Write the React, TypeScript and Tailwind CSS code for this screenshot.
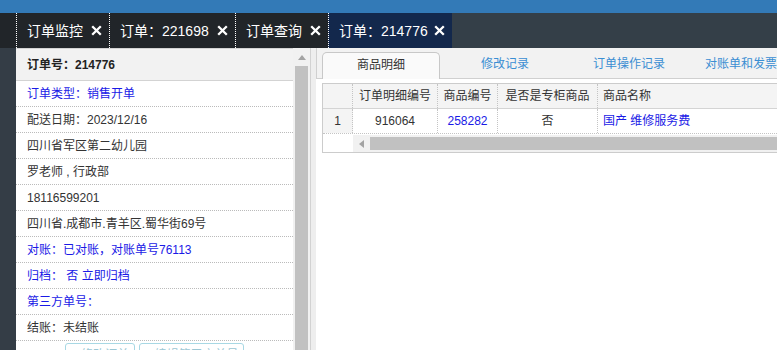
import React from "react";

function CloseX() {
  return (
    <svg width="11" height="11" viewBox="0 0 11 11" className="shrink-0">
      <path d="M1.2 1.2L9.8 9.8M9.8 1.2L1.2 9.8" stroke="white" strokeWidth="2.3" strokeLinecap="butt" />
    </svg>
  );
}

const topTabs = [
  { label: "订单监控", w: "w-[93px]", active: false },
  { label: "订单：221698", w: "w-[126px]", active: false },
  { label: "订单查询", w: "w-[93px]", active: false },
  { label: "订单：214776", w: "w-[124px]", active: true },
];

const rows = [
  { t: "订单类型：销售开单", blue: true },
  { t: "配送日期：2023/12/16", blue: false },
  { t: "四川省军区第二幼儿园", blue: false },
  { t: "罗老师 , 行政部", blue: false },
  { t: "18116599201", blue: false },
  { t: "四川省.成都市.青羊区.蜀华街69号", blue: false },
  { t: "对账：已对账，对账单号76113", blue: true },
  { t: "归档： 否 立即归档", blue: true },
  { t: "第三方单号：", blue: true },
  { t: "结账：未结账", blue: false },
];

const subTabs = [
  { label: "商品明细", w: "w-[118px]", active: true },
  { label: "修改记录", w: "w-[118px]", active: false },
  { label: "订单操作记录", w: "w-[118px]", active: false },
  { label: "对账单和发票", w: "w-[94px]", active: false },
];

export default function App() {
  return (
    <div className="w-[777px] h-[350px] overflow-hidden bg-[#343d46] flex flex-col font-['Liberation_Sans','Noto_Sans_CJK_SC',sans-serif]">
      <div className="h-[13px] bg-[#337ab7] shrink-0" />
      <div className="h-[35px] shrink-0 flex bg-[#343f48]">
        <div className="w-[16px] bg-[#212529]" />
        {topTabs.map((t) => (
          <div
            key={t.label}
            className={`${t.w} h-full flex items-center justify-between pl-[10px] pr-[7px] border-l border-dotted border-white text-white text-[14px] leading-none ${
              t.active ? "bg-[#13284c]" : "bg-[#212529]"
            }`}
          >
            <span>{t.label}</span>
            <CloseX />
          </div>
        ))}
      </div>
      <div className="flex-1 flex min-h-0">
        <div className="w-[16px] shrink-0" />
        {/* left panel */}
        <div className="w-[277px] shrink-0 bg-white flex flex-col text-[12px] leading-none">
          <div className="h-[33px] shrink-0 bg-[#f2f2f2] border-t border-b border-[#d3d3d3] flex items-center pl-[11px] font-bold text-[#222]">
            订单号：214776
          </div>
          {rows.map((r) => (
            <div
              key={r.t}
              className={`h-[26px] shrink-0 border-b border-dotted border-[#bbbbbb] flex items-center pl-[11px] whitespace-pre ${
                r.blue ? "text-[#1a1ae6]" : "text-[#333]"
              }`}
            >
              {r.t}
            </div>
          ))}
          <div className="flex justify-center gap-[4px] pt-[2px]">
            <div className="w-[70px] h-[24px] border border-[#a8d8e4] rounded-[3px] flex items-center justify-center text-[#9cc7d4]">
              ✎修改订单
            </div>
            <div className="w-[105px] h-[24px] border border-[#a8d8e4] rounded-[3px] flex items-center justify-center text-[#9cc7d4]">
              ✎编辑第三方单号
            </div>
          </div>
        </div>
        {/* left scrollbar */}
        <div className="w-[17px] shrink-0 bg-[#f1f1f1] flex flex-col pt-[1px]">
          <div className="h-[17px] flex items-center justify-center">
            <svg width="8" height="5" viewBox="0 0 8 5">
              <path d="M0 5L4 0L8 5Z" fill="#a3a3a3" />
            </svg>
          </div>
          <div className="flex-1 mx-[2px] bg-[#c1c1c1]" />
        </div>
        {/* splitter */}
        <div className="w-[6px] shrink-0 bg-[#eeeeee] border-l border-[#d2d2d2]" />
        {/* right panel */}
        <div className="flex-1 min-w-0 bg-white overflow-hidden text-[12px] leading-none">
          <div className="h-[31px] bg-[#f2f2f2] border-b border-l border-[#d0d0d0] flex items-end pl-[5px]">
            {subTabs.map((t) =>
              t.active ? (
                <div
                  key={t.label}
                  className={`${t.w} h-[27px] -mb-px shrink-0 bg-[#fafafa] border border-b-0 border-[#c8c8c8] rounded-t-[5px] flex items-center justify-center pb-[2px] text-[#333]`}
                >
                  {t.label}
                </div>
              ) : (
                <div
                  key={t.label}
                  className={`${t.w} ml-[6px] h-[27px] shrink-0 flex items-center justify-center pb-[2px] text-[#3a8ed3]`}
                >
                  {t.label}
                </div>
              )
            )}
          </div>
          <div className="mt-[4px] ml-[6px] w-[560px] border border-[#cccccc]">
            <div className="h-[25px] flex bg-[#f4f4f4] border-b border-[#d4d4d4] text-[#333]">
              <div className="w-[30px] shrink-0 border-r border-dotted border-[#c4c4c4]" />
              <div className="w-[85px] shrink-0 border-r border-dotted border-[#c4c4c4] flex items-center justify-center">订单明细编号</div>
              <div className="w-[60px] shrink-0 border-r border-dotted border-[#c4c4c4] flex items-center justify-center">商品编号</div>
              <div className="w-[100px] shrink-0 border-r border-dotted border-[#c4c4c4] flex items-center justify-center">是否是专柜商品</div>
              <div className="flex-1 flex items-center pl-[5px]">商品名称</div>
            </div>
            <div className="h-[25px] flex border-b border-dotted border-[#c4c4c4]">
              <div className="w-[30px] shrink-0 bg-[#f4f4f4] border-r border-dotted border-[#c4c4c4] flex items-center justify-center text-[#333]">1</div>
              <div className="w-[85px] shrink-0 border-r border-dotted border-[#c4c4c4] flex items-center justify-center text-[#333]">916064</div>
              <div className="w-[60px] shrink-0 border-r border-dotted border-[#c4c4c4] flex items-center justify-center text-[#1a1ae6]">258282</div>
              <div className="w-[100px] shrink-0 border-r border-dotted border-[#c4c4c4] flex items-center justify-center text-[#333]">否</div>
              <div className="flex-1 flex items-center pl-[5px] text-[#1a1ae6]">国产 维修服务费</div>
            </div>
            <div className="h-[18px] flex pt-px">
              <div className="w-[30px] shrink-0 bg-white" />
              <div className="flex-1 bg-[#f1f1f1] flex items-center">
                <div className="w-[17px] h-full flex items-center justify-center">
                  <svg width="5" height="8" viewBox="0 0 5 8">
                    <path d="M5 0L0 4L5 8Z" fill="#a3a3a3" />
                  </svg>
                </div>
                <div className="flex-1 h-[13px] bg-[#c1c1c1]" />
              </div>
            </div>
          </div>
        </div>
      </div>
    </div>
  );
}
